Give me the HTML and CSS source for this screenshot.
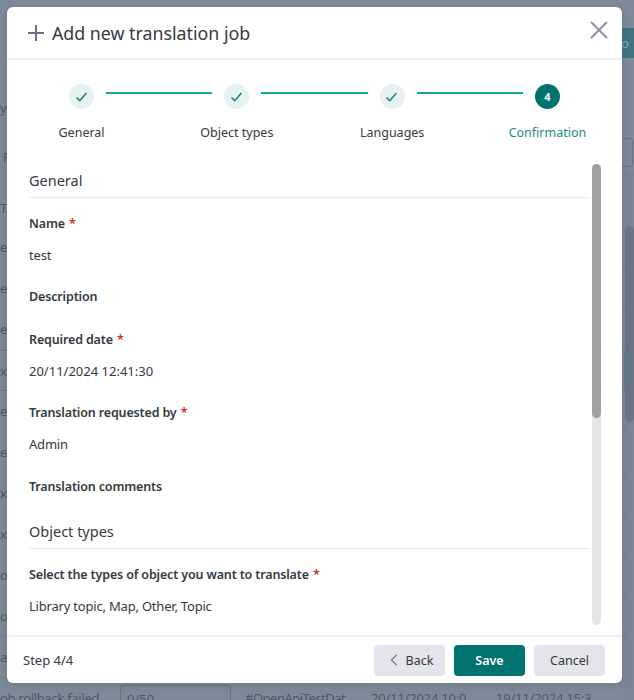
FILE: index.html
```html
<!DOCTYPE html>
<html lang="en">
<head>
    <meta charset="UTF-8">
    <title>Add new translation job</title>
    <link rel="stylesheet" href="styles.css">
</head>
<body>
    <!-- Page behind the dialog -->
    <div class="page">
        <div class="page-title">y</div>
        <div class="page-filter">F</div>
        <div class="page-head">TA</div>
        <div class="row">e</div>
        <div class="row">e</div>
        <div class="row">e</div>
        <div class="row selected">xp</div>
        <div class="row">e</div>
        <div class="row">e</div>
        <div class="row">xp</div>
        <div class="row">xp</div>
        <div class="row">o</div>
        <div class="row">o</div>
        <div class="row">a</div>
        <div class="row">
            <span class="cell-name">ob rollback failed</span>
            <span class="cell-count">0/50</span>
            <span class="cell-tag">#OpenApiTestDat</span>
            <span class="cell-date">20/11/2024 10:0</span>
            <span class="cell-date">19/11/2024 15:3</span>
        </div>
        <div class="page-action">o</div>
        <div class="page-input"></div>
        <div class="page-scroll"><div class="page-scroll-thumb"></div></div>
    </div>

    <!-- Dialog -->
    <div class="dialog">
        <div class="dialog-header">
            <svg class="plus-icon" width="18" height="18" viewBox="0 0 18 18"><path d="M9 1v16M1 9h16"/></svg>
            <h1>Add new translation job</h1>
            <svg class="close-icon" width="18" height="18" viewBox="0 0 18 18"><path d="M1 1l16 16M17 1L1 17"/></svg>
        </div>

        <!-- Steps -->
        <div class="stepper">
            <div class="step">
                <span class="step-dot"><svg width="14" height="12" viewBox="0 0 14 12"><path d="M1.5 6.5l3.2 3.2 6.8-7.7"/></svg></span>
                <span class="step-name">General</span>
            </div>
            <div class="step-line"></div>
            <div class="step">
                <span class="step-dot"><svg width="14" height="12" viewBox="0 0 14 12"><path d="M1.5 6.5l3.2 3.2 6.8-7.7"/></svg></span>
                <span class="step-name">Object types</span>
            </div>
            <div class="step-line"></div>
            <div class="step">
                <span class="step-dot"><svg width="14" height="12" viewBox="0 0 14 12"><path d="M1.5 6.5l3.2 3.2 6.8-7.7"/></svg></span>
                <span class="step-name">Languages</span>
            </div>
            <div class="step-line"></div>
            <div class="step current">
                <span class="step-dot">4</span>
                <span class="step-name">Confirmation</span>
            </div>
        </div>

        <div class="dialog-body">
            <div class="summary">
                <h2>General</h2>
                <div class="field"><div class="label">Name <span class="req">*</span></div><div class="value">test</div></div>
                <div class="field"><div class="label">Description</div></div>
                <div class="field"><div class="label">Required date <span class="req">*</span></div><div class="value value-date">20/11/2024 12:41:30</div></div>
                <div class="field"><div class="label">Translation requested by <span class="req">*</span></div><div class="value">Admin</div></div>
                <div class="field"><div class="label">Translation comments</div></div>
                <h2>Object types</h2>
                <div class="field"><div class="label">Select the types of object you want to translate <span class="req">*</span></div><div class="value">Library topic, Map, Other, Topic</div></div>
            </div>
            <div class="scrollbar"><div class="scroll-thumb"></div></div>
        </div>

        <div class="dialog-footer">
            <span class="step-count">Step 4/4</span>
            <button class="btn btn-back"><svg width="8" height="12" viewBox="0 0 8 12"><path d="M6.5 1L1.5 6l5 5"/></svg>Back</button>
            <button class="btn btn-save">Save</button>
            <button class="btn">Cancel</button>
        </div>
    </div>
</body>
</html>
```

FILE: styles.css
```css
html, body {
    height: 100%;
}

body {
    margin: 0;
    overflow: hidden;
    background-color: #7f8a98;
    font-family: 'Noto Sans', 'Open Sans', sans-serif;
    font-size: 13px;
    color: #333a42;
}

/* Dimmed page behind the dialog */
.page {
    height: 100%;
    padding-top: 98px;
    box-sizing: border-box;
    overflow: hidden;
    color: #4e5967;
    line-height: 20px;
}

.page-filter {
    margin-top: 29px;
    padding-left: 3px;
}

.page-head {
    margin-top: 31px;
    margin-bottom: 9px;
}

.row {
    display: flex;
    align-items: center;
    height: 41px;
    box-sizing: border-box;
    border-bottom: 1px solid #79848f;
}

.row.selected {
    margin-right: 9px;
    border: 1px solid #4d8a8e;
    border-left: none;
}

.cell-name {
    width: 120px;
    flex-shrink: 0;
    letter-spacing: -0.3px;
    white-space: nowrap;
}

.cell-count {
    width: 111px;
    height: 26px;
    margin-right: 14px;
    padding-left: 6px;
    flex-shrink: 0;
    box-sizing: border-box;
    border: 1px solid #687382;
    border-radius: 2px;
    line-height: 26px;
}

.cell-tag {
    width: 126px;
    flex-shrink: 0;
    letter-spacing: -0.5px;
    white-space: nowrap;
}

.cell-date {
    width: 125px;
    flex-shrink: 0;
    letter-spacing: -0.2px;
    white-space: nowrap;
}

.page-action {
    position: absolute;
    top: 28px;
    right: 0;
    width: 22px;
    height: 30px;
    border-radius: 6px 0 0 6px;
    background-color: #3f7480;
    color: #8ba7ad;
    line-height: 30px;
    text-indent: 9px;
}

.page-input {
    position: absolute;
    top: 138px;
    right: 1px;
    width: 20px;
    height: 29px;
    box-sizing: border-box;
    border: 1px solid #687382;
    border-radius: 3px;
}

.page-scroll {
    position: absolute;
    top: 170px;
    right: 0;
    bottom: 0;
    width: 9px;
    background-color: #7b8694;
}

.page-scroll-thumb {
    height: 196px;
    margin-top: 56px;
    border-radius: 5px;
    background-color: #6a7583;
}

/* Dialog */
.dialog {
    position: absolute;
    top: 7px;
    left: 7px;
    width: 615px;
    height: 676px;
    display: flex;
    flex-direction: column;
    background-color: #fff;
    border-radius: 6px;
    box-shadow: 0 2px 10px rgba(60, 70, 85, 0.25);
}

.dialog-header {
    display: flex;
    align-items: center;
    gap: 7px;
    height: 51px;
    padding: 0 14px 0 20px;
    border-bottom: 2px solid #f0f1f3;
    flex-shrink: 0;
}

.dialog-header h1 {
    flex: 1;
    margin: 0;
    font-size: 17.8px;
    font-weight: 400;
    color: #333a42;
}

.dialog-header svg {
    fill: none;
    stroke-width: 2;
}

.plus-icon {
    stroke: #66708c;
}

.close-icon {
    margin-bottom: 6px;
    stroke: #8b92a8;
}

/* Steps */
.stepper {
    display: flex;
    align-items: flex-start;
    justify-content: center;
    padding-top: 24px;
    height: 80px;
    flex-shrink: 0;
}

.step {
    display: flex;
    flex-direction: column;
    align-items: center;
    width: 25px;
    gap: 15px;
    white-space: nowrap;
}

.step-dot {
    display: flex;
    align-items: center;
    justify-content: center;
    width: 25px;
    height: 25px;
    border-radius: 50%;
    background-color: #e6f1f1;
    font-size: 11px;
    font-weight: 700;
}

.step-dot svg {
    fill: none;
    stroke: #14807c;
    stroke-width: 1.5;
}

.step-name {
    font-size: 12.5px;
    line-height: 17px;
}

.current .step-dot {
    background-color: #00736e;
    color: #fff;
}

.current .step-name {
    color: #1f8a86;
}

.step-line {
    width: 106.3px;
    height: 2px;
    margin: 8px 12px 0;
    background-color: #12a89d;
}

/* Summary */
.dialog-body {
    flex: 1;
    min-height: 0;
    display: flex;
    padding: 0 21px 0 22px;
    overflow: hidden;
}

.summary {
    flex: 1;
    min-width: 0;
    padding-top: 4px;
    padding-right: 2px;
}

.summary h2 {
    margin: 0 0 16px;
    padding-bottom: 4px;
    font-size: 14.5px;
    line-height: 25px;
    font-weight: 400;
    border-bottom: 1px solid #e9e9ee;
}

.field {
    margin-bottom: 22.4px;
}

.label {
    font-size: 12.5px;
    font-weight: 600;
    line-height: 20px;
    letter-spacing: -0.15px;
}

.req {
    margin-left: 1px;
    color: #d02c25;
}

.value {
    margin-top: 11px;
    line-height: 20px;
    letter-spacing: -0.2px;
}

.value-date {
    letter-spacing: 0;
}

.scrollbar {
    width: 9px;
    height: 461px;
    border-radius: 5px;
    background-color: #e6e6e6;
    flex-shrink: 0;
}

.scroll-thumb {
    height: 254px;
    border-radius: 5px;
    background-color: #a0a0a0;
}

/* Footer */
.dialog-footer {
    display: flex;
    align-items: center;
    gap: 9px;
    height: 46px;
    padding: 0 17px 0 16px;
    border-top: 2px solid #eeeef3;
    flex-shrink: 0;
}

.step-count {
    flex: 1;
}

.btn {
    display: flex;
    align-items: center;
    justify-content: center;
    gap: 8px;
    width: 71px;
    height: 31px;
    padding: 0;
    border: none;
    border-radius: 4px;
    background-color: #e3e5ea;
    font-family: inherit;
    font-size: 12.5px;
    color: #333a42;
}

.btn svg {
    fill: none;
    stroke: #7d86a0;
    stroke-width: 1.5;
}

.btn-back {
    padding-left: 4px;
}

.btn-save {
    background-color: #00736e;
    color: #fff;
    font-weight: 600;
}
```
